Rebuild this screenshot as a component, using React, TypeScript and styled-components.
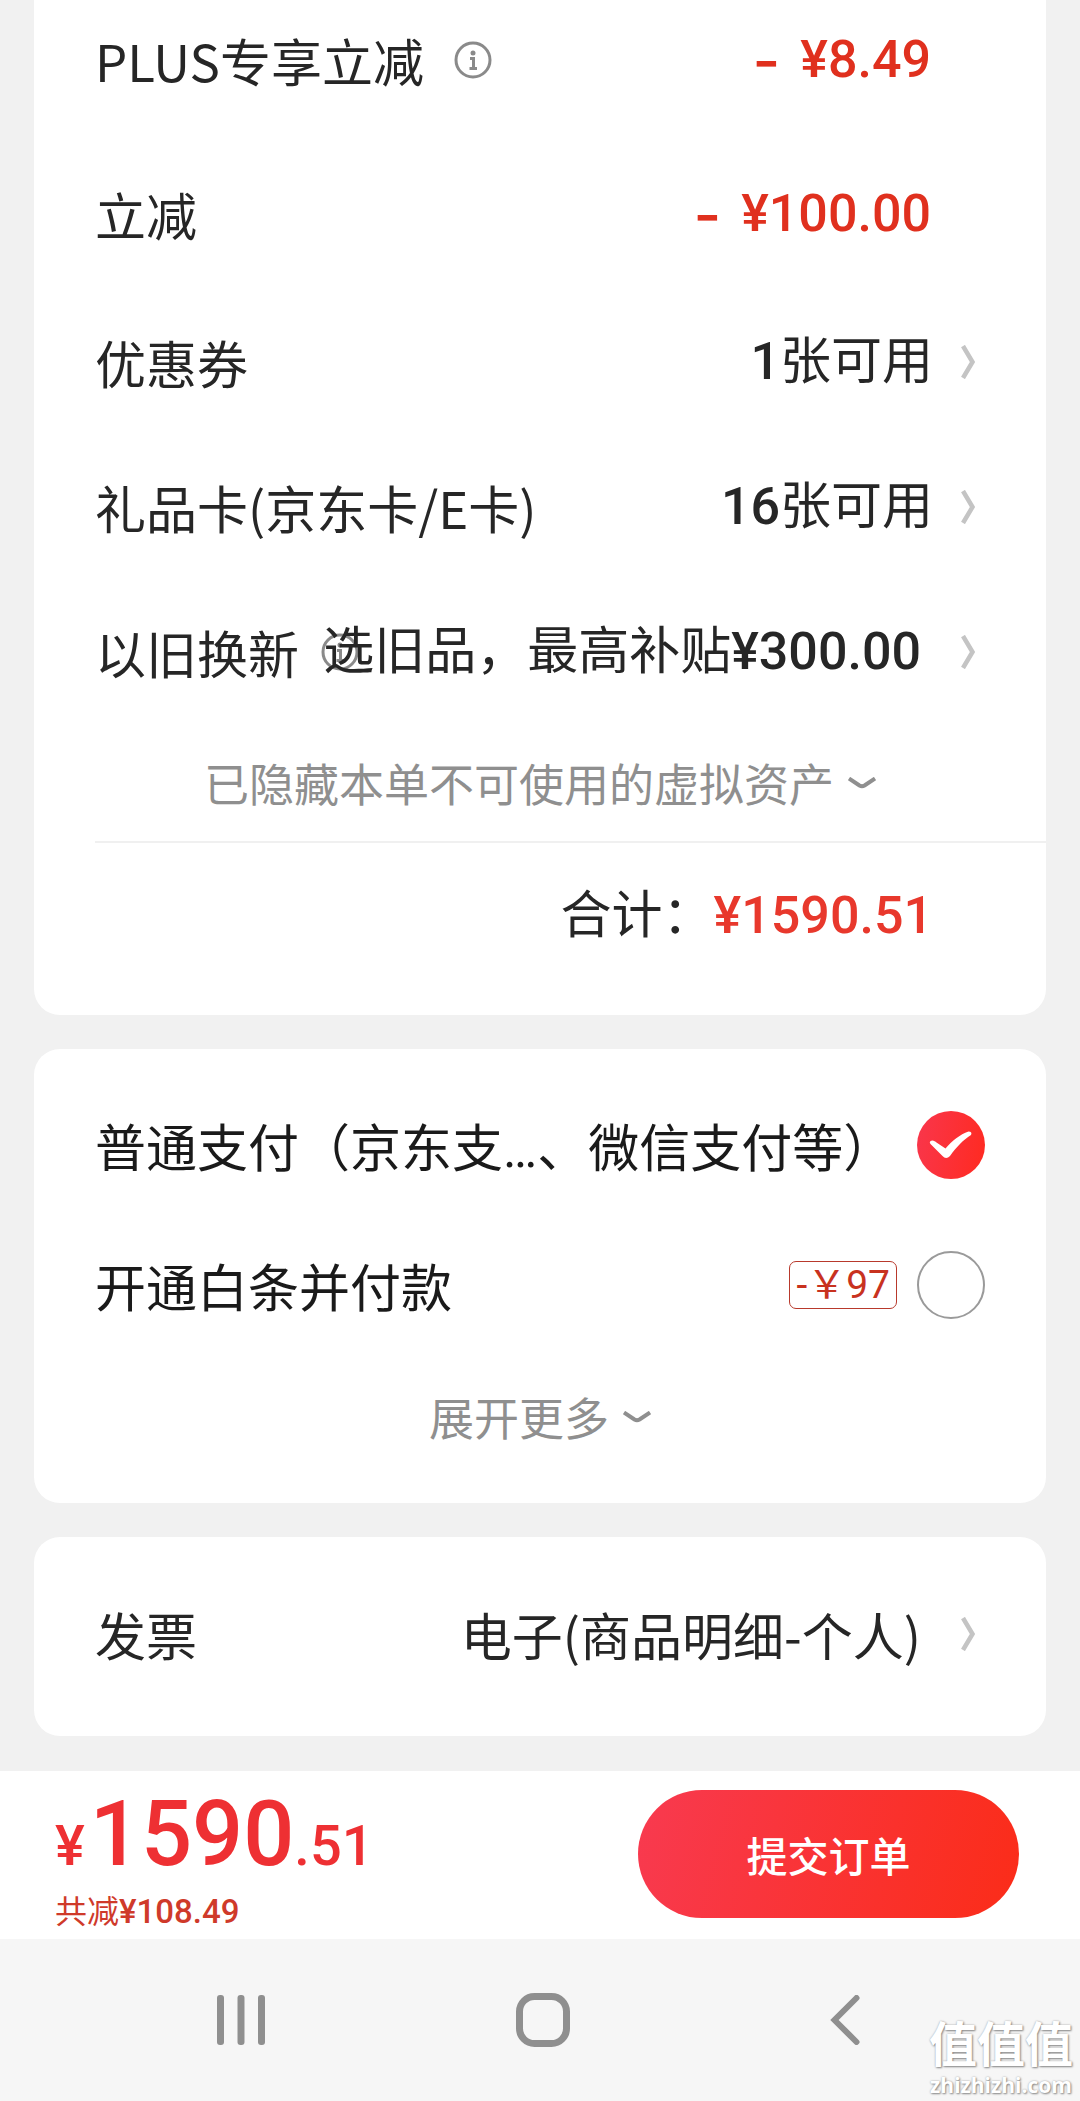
import React, { useState } from "react";
import styled, { createGlobalStyle, css } from "styled-components";

const cjk = `"Noto Sans CJK SC", "Noto Sans", sans-serif`;
const latin = `Roboto, "Noto Sans CJK SC", sans-serif`;

const GlobalStyle = createGlobalStyle`
  *, *::before, *::after { box-sizing: border-box; }
  body { margin: 0; background: #f1f1f1; }
  button { margin: 0; padding: 0; border: 0; background: none; font: inherit; color: inherit; cursor: pointer; }
  svg { display: block; flex: none; }
`;

const Page = styled.div`
  position: relative;
  overflow: hidden;
  background: #f1f1f1;
  color: #262626;
  font-family: ${cjk};
  font-size: 51px;
  line-height: 60px;
`;

const Main = styled.main`
  display: flex;
  flex-direction: column;
  gap: 34px;
  padding: 0 34px 35px;
`;

const Card = styled.section<{ $attached?: boolean; $top?: number; $bottom?: number }>`
  background: #fff;
  border-radius: ${(p) => (p.$attached ? "0 0 26px 26px" : "26px")};
  padding-top: ${(p) => p.$top ?? 0}px;
  padding-bottom: ${(p) => p.$bottom ?? 0}px;
`;

const Discounts = styled.div`
  display: flex;
  flex-direction: column;
  gap: 36px;
  padding-bottom: 16px;
`;

const rowBase = css`
  display: flex;
  align-items: center;
  justify-content: space-between;
  padding-left: 61px;
  white-space: nowrap;
`;

const DiscountRow = styled.div`
  ${rowBase}
  height: 118px;
  padding-right: 115px;
`;

const AssetRow = styled.div<{ $height?: number }>`
  ${rowBase}
  height: ${(p) => p.$height ?? 145}px;
  padding-right: 71px;
`;

const PayRow = styled.div`
  ${rowBase}
  height: 140px;
  padding-right: 61px;
  color: #1a1a1a;
`;

/* May shrink below its content, so a long value slides over the label's tip icon. */
const Label = styled.div<{ $gap?: number }>`
  flex: 1 1 0;
  min-width: 0;
  display: flex;
  align-items: center;
  gap: ${(p) => p.$gap ?? 30}px;
`;

const TipButton = styled.button`
  flex: none;
  color: #8a8a8a;
`;

const Amount = styled.span`
  display: flex;
  gap: 20px;
  font-family: ${latin};
  font-size: 52px;
  font-weight: 500;
  color: #e0301e;
`;

const Dash = styled.span`
  font-family: Inter, sans-serif;
  font-size: 60px;
`;

const ValueButton = styled.button<{ $gap?: number; $cjk?: boolean }>`
  position: relative;
  flex: none;
  display: flex;
  align-items: center;
  gap: ${(p) => p.$gap ?? 28}px;
  font-family: ${(p) => (p.$cjk ? cjk : latin)};
`;

const Num = styled.span<{ $size?: number }>`
  font-family: ${latin};
  font-size: ${(p) => p.$size ?? 52}px;
  font-weight: 500;
`;

const MoreButton = styled.button<{ $height: number }>`
  display: flex;
  align-items: center;
  justify-content: center;
  gap: 14px;
  width: 100%;
  height: ${(p) => p.$height}px;
  font-size: 45px;
  color: #8f8f8f;
`;

const TotalRow = styled.div`
  display: flex;
  align-items: baseline;
  justify-content: flex-end;
  height: 174px;
  margin-left: 61px;
  padding: 38px 113px 0 0;
  border-top: 2px solid #f0f0f0;
`;

const TotalAmount = styled(Num)`
  color: #e8382c;
`;

const PayLabel = styled.label`
  flex: 1 1 0;
`;

const Ellipsis = styled.span`
  font-family: ${latin};
  line-height: 1;
`;

const PaySide = styled.div`
  display: flex;
  align-items: center;
  gap: 20px;
`;

const Coupon = styled.span`
  padding: 0 6px;
  border: 1px solid #b8392c;
  border-radius: 7px;
  font-family: ${latin};
  font-size: 39px;
  line-height: 46px;
  color: #c8321f;
`;

const RadioWrap = styled.span`
  display: grid;

  > * {
    grid-area: 1 / 1;
    place-self: center;
  }

  svg {
    pointer-events: none;
  }
`;

const Radio = styled.input`
  appearance: none;
  width: 68px;
  height: 68px;
  margin: 0;
  border: 2px solid #9a9a9a;
  border-radius: 50%;
  background: #fff;

  &:checked {
    border: 0;
    background: linear-gradient(100deg, #f9364c, #ff2a20);
  }
`;

const Footer = styled.footer`
  display: flex;
  align-items: flex-start;
  justify-content: space-between;
  height: 168px;
  padding: 16px 61px 0 55px;
  background: #fff;
  white-space: nowrap;
`;

const Price = styled.div`
  display: flex;
  align-items: baseline;
  height: 96px;
  font-family: ${latin};
  font-size: 90px;
  font-weight: 500;
  line-height: 96px;
  color: #ee3033;
`;

const Currency = styled.span`
  margin-right: 5px;
  font-size: 56px;
  line-height: 56px;
`;

const Cents = styled.span`
  font-size: 56px;
  line-height: 56px;
`;

const Saved = styled.div`
  margin-top: 6px;
  font-size: 32px;
  line-height: 40px;
  color: #cf3a2a;
`;

const SubmitButton = styled.button`
  width: 381px;
  height: 128px;
  margin-top: 3px;
  border-radius: 64px;
  background: linear-gradient(105deg, #f83a50, #fb2c18);
  font-size: 41px;
  font-weight: 500;
  color: #fff;
`;

const NavBar = styled.nav`
  display: flex;
  height: 162px;
  padding: 0 84px 0 90px;
  background: #f6f6f6;
`;

const NavButton = styled.button`
  flex: 1;
  display: flex;
  align-items: center;
  justify-content: center;
  color: #8f8f8f;
`;

const Watermark = styled.div`
  position: absolute;
  right: 7px;
  bottom: 3px;
  text-align: center;
  font-family: ${latin};
  font-size: 48px;
  font-weight: 700;
  line-height: 52px;
  color: #fff;
  text-shadow: 1px 1px 2px #8a8a8a, 0 0 2px #a8a8a8;
`;

const WatermarkSite = styled.div`
  font-family: "Open Sans", sans-serif;
  font-size: 21px;
  line-height: 26px;
`;

const InfoIcon = () => (
  <svg width="38" height="38" viewBox="0 0 38 38" fill="none" stroke="currentColor">
    <circle cx="19" cy="19" r="17" strokeWidth="3" />
    <circle cx="19" cy="12" r="2.5" fill="currentColor" stroke="none" />
    <path d="M16 17.5h3.5V27M15.500 27.500h7.500" strokeWidth="3" />
  </svg>
);

const ChevronRight = () => (
  <svg width="14" height="34" viewBox="0 0 14 34" fill="none">
    <path d="M2 1L11.500 17L2 33" stroke="#c4c4c4" strokeWidth="4.500" />
  </svg>
);

const ChevronDown = () => (
  <svg width="28" height="12" viewBox="0 0 28 12" fill="none">
    <path d="M1 1.500L11.500 8.500Q14 10 16.500 8.500L27 1.500" stroke="currentColor" strokeWidth="4" />
  </svg>
);

const CheckIcon = () => (
  <svg width="68" height="68" viewBox="0 0 68 68" fill="#fff">
    <path d="M13.500 30C15.500 28.500 18 30 19.500 31.500L28.500 37.500C35 30 43 23.500 51.500 20.500Q55.500 20.500 54 24C46 29 39 36.500 33 45Q29 49 25.500 45L13.500 33Q12 31.500 13.500 30Z" />
  </svg>
);

const RecentsIcon = () => (
  <svg width="48" height="50" viewBox="0 0 48 50" fill="currentColor">
    <rect x="0" y="0" width="7" height="50" rx="3" />
    <rect x="20.500" y="0" width="7" height="50" rx="3" />
    <rect x="41" y="0" width="7" height="50" rx="3" />
  </svg>
);

const HomeIcon = () => (
  <svg width="54" height="54" viewBox="0 0 54 54" fill="none" stroke="currentColor" strokeWidth="7">
    <rect x="3.500" y="3.500" width="47" height="47" rx="15" />
  </svg>
);

const BackIcon = () => (
  <svg width="30" height="50" viewBox="0 0 30 50" fill="none" stroke="currentColor" strokeWidth="6" strokeLinecap="round">
    <path d="M26.500 3L4.500 25L26.500 47" />
  </svg>
);

export default function App() {
  const [method, setMethod] = useState("normal");

  return (
    <Page>
      <GlobalStyle />
      <Main>
        <Card $attached $top={1}>
          <Discounts>
            <DiscountRow>
              <Label>
                PLUS专享立减
                <TipButton aria-label="说明"><InfoIcon /></TipButton>
              </Label>
              <Amount><Dash>-</Dash>¥8.49</Amount>
            </DiscountRow>
            <DiscountRow>
              <Label>立减</Label>
              <Amount><Dash>-</Dash>¥100.00</Amount>
            </DiscountRow>
          </Discounts>
          <AssetRow>
            <Label>优惠券</Label>
            <ValueButton>
              <span><Num>1</Num>张可用</span>
              <ChevronRight />
            </ValueButton>
          </AssetRow>
          <AssetRow>
            <Label>礼品卡(京东卡/E卡)</Label>
            <ValueButton>
              <span><Num>16</Num>张可用</span>
              <ChevronRight />
            </ValueButton>
          </AssetRow>
          <AssetRow>
            <Label $gap={22}>
              以旧换新
              <TipButton aria-label="说明"><InfoIcon /></TipButton>
            </Label>
            <ValueButton $gap={40}>
              <span>选旧品，最高补贴<Num>¥300.00</Num></span>
              <ChevronRight />
            </ValueButton>
          </AssetRow>
          <MoreButton $height={117}>
            已隐藏本单不可使用的虚拟资产
            <ChevronDown />
          </MoreButton>
          <TotalRow>
            合计：<TotalAmount>¥1590.51</TotalAmount>
          </TotalRow>
        </Card>

        <Card $top={26} $bottom={24}>
          <PayRow>
            <PayLabel htmlFor="pay-normal">普通支付（京东支<Ellipsis>…</Ellipsis>、微信支付等）</PayLabel>
            <RadioWrap>
              <Radio
                type="radio"
                id="pay-normal"
                name="pay"
                checked={method === "normal"}
                onChange={() => setMethod("normal")}
              />
              {method === "normal" && <CheckIcon />}
            </RadioWrap>
          </PayRow>
          <PayRow>
            <PayLabel htmlFor="pay-baitiao">开通白条并付款</PayLabel>
            <PaySide>
              <Coupon>-￥97</Coupon>
              <RadioWrap>
                <Radio
                  type="radio"
                  id="pay-baitiao"
                  name="pay"
                  checked={method === "baitiao"}
                  onChange={() => setMethod("baitiao")}
                />
                {method === "baitiao" && <CheckIcon />}
              </RadioWrap>
            </PaySide>
          </PayRow>
          <MoreButton $height={124}>
            展开更多
            <ChevronDown />
          </MoreButton>
        </Card>

        <Card $bottom={6}>
          <AssetRow $height={193}>
            <Label>发票</Label>
            <ValueButton $gap={40} $cjk>
              电子(商品明细-个人)
              <ChevronRight />
            </ValueButton>
          </AssetRow>
        </Card>
      </Main>

      <Footer>
        <div>
          <Price>
            <Currency>¥</Currency>1590<Cents>.51</Cents>
          </Price>
          <Saved>共减<Num $size={33}>¥108.49</Num></Saved>
        </div>
        <SubmitButton>提交订单</SubmitButton>
      </Footer>

      <NavBar>
        <NavButton aria-label="最近任务"><RecentsIcon /></NavButton>
        <NavButton aria-label="主屏幕"><HomeIcon /></NavButton>
        <NavButton aria-label="返回"><BackIcon /></NavButton>
      </NavBar>

      <Watermark>
        值值值
        <WatermarkSite>zhizhizhi.com</WatermarkSite>
      </Watermark>
    </Page>
  );
}
